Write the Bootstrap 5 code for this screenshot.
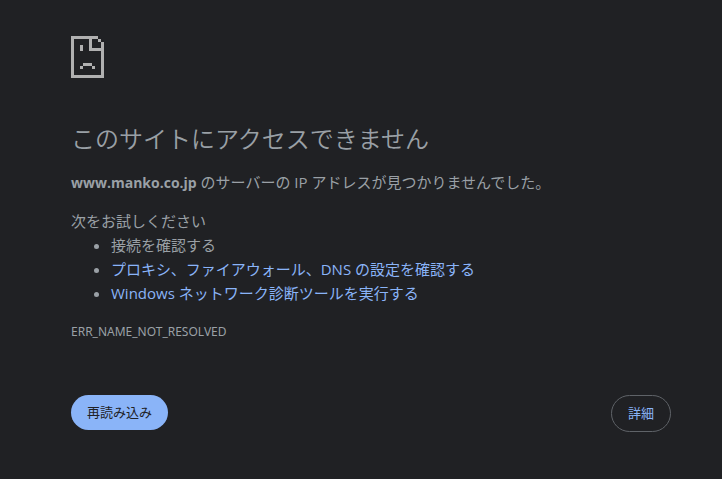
<!DOCTYPE html>
<html lang="ja">
<head>
<meta charset="utf-8">
<meta name="viewport" content="width=device-width, initial-scale=1">
<title>www.manko.co.jp</title>
<link href="https://cdn.jsdelivr.net/npm/bootstrap@5.3.0/dist/css/bootstrap.min.css" rel="stylesheet">
<style>
body { background: #202124; color: #9aa0a6; font: 15px/24px "Open Sans", "Noto Sans CJK JP", sans-serif; }
.error-page { padding: 36px 51px 40px 71px; }
.error-icon { width: 33px; height: 42px; fill: #b0b0b0; }
h1 { font-size: 24px; line-height: 32px; font-weight: 350; margin: 45px 0 15px; }
.summary { margin-bottom: 14px; }
.summary strong { font-size: 14px; }
.suggestions { padding-left: 40px; }
a { color: #8ab4f8; text-decoration: none; }
.error-code { font-family: "Noto Sans", "Open Sans", sans-serif; font-size: 12px; line-height: 18px; margin-top: 18px; }
.actions { margin-top: 54px; }
.btn { font-size: 13px; line-height: 19px; padding: 8px 16px; }
.btn-reload, .btn-reload:hover { background: #8ab4f8; color: #202124; border: 0; }
.btn-details, .btn-details:hover { color: #8ab4f8; border: 1px solid #5f6368; }
</style>
<script src="https://cdn.jsdelivr.net/npm/bootstrap@5.3.0/dist/js/bootstrap.bundle.min.js"></script>
</head>
<body>
<main class="error-page">
  <svg class="error-icon d-block" viewBox="0 0 11 14" shape-rendering="crispEdges" aria-hidden="true">
    <path d="M0 0H9V1H7V4H11V5H6V1H1V13H10V5H11V14H0ZM9 1H10V2H9ZM10 2H11V5H10ZM3 3H4V5H3ZM4 9H7V10H4ZM3 10H4V11H3ZM7 10H8V11H7Z"/>
  </svg>
  <h1>このサイトにアクセスできません</h1>
  <p class="summary"><strong>www.manko.co.jp</strong> のサーバーの IP アドレスが見つかりませんでした。</p>
  <p class="mb-0">次をお試しください</p>
  <ul class="suggestions mb-0">
    <li>接続を確認する</li>
    <li><a href="#">プロキシ、ファイアウォール、DNS の設定を確認する</a></li>
    <li><a href="#">Windows ネットワーク診断ツールを実行する</a></li>
  </ul>
  <div class="error-code">ERR_NAME_NOT_RESOLVED</div>
  <div class="actions d-flex justify-content-between align-items-start">
    <button type="button" class="btn btn-reload rounded-pill">再読み込み</button>
    <button type="button" class="btn btn-details rounded-pill">詳細</button>
  </div>
</main>
</body>
</html>
